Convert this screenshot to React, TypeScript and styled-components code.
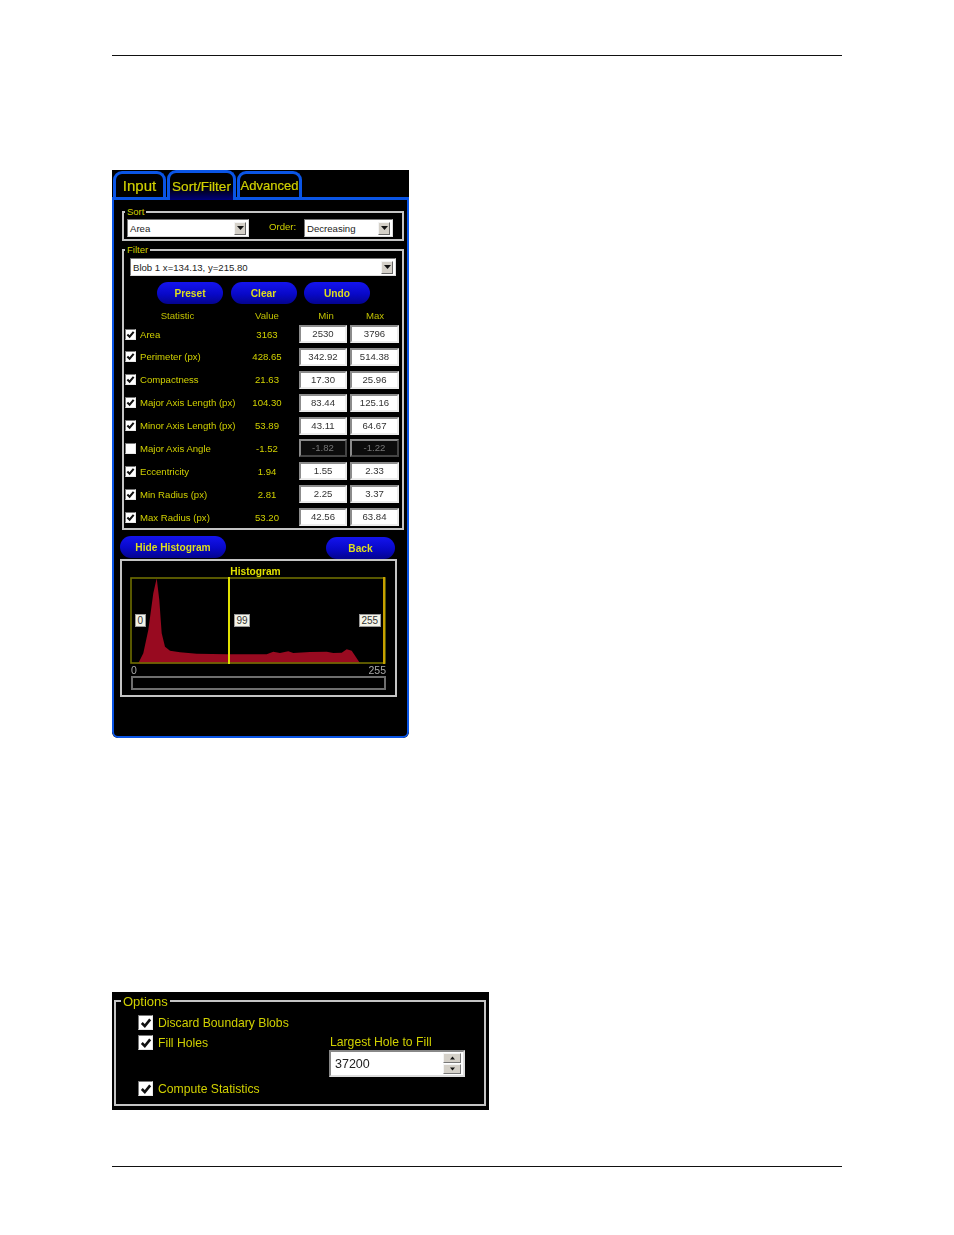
import React from 'react'
import styled, { createGlobalStyle } from 'styled-components'

const GlobalStyle = createGlobalStyle`
  html, body {
    margin: 0;
    padding: 0;
    background: #ffffff;
  }
  body {
    font-family: Tahoma, "Liberation Sans", Arial, sans-serif;
  }
`

const YELLOW = '#d0d000'

const Page = styled.main`
  width: 954px;
  height: 1235px;
  box-sizing: border-box;
  padding: 55px 112px 0;
  overflow: hidden;
`

const Rule = styled.hr`
  width: 730px;
  height: 1px;
  margin: 0;
  border: 0;
  background: #111;
`

const AppPanel = styled.section`
  width: 297px;
  height: 568px;
  margin-top: 114px;
  background: #000;
  border-radius: 0 0 6px 6px;
  box-sizing: border-box;
  filter: blur(0.5px);
  overflow: hidden;
`

const TabBar = styled.nav`
  display: flex;
  align-items: flex-end;
  height: 27px;
  box-sizing: border-box;
  padding-left: 1px;
  gap: 1px;
`

const Tab = styled.div<{ $active?: boolean; $width: number; $size: number }>`
  width: ${p => p.$width}px;
  height: ${p => (p.$active ? 30 : 26)}px;
  margin-bottom: ${p => (p.$active ? -3 : 0)}px;
  box-sizing: border-box;
  border: 3px solid #0a55e6;
  border-bottom: 0;
  border-radius: 9px 9px 0 0;
  background: ${p => (p.$active ? 'linear-gradient(#000 50%, #00007a)' : '#000')};
  color: ${YELLOW};
  font-size: ${p => p.$size}px;
  line-height: ${p => (p.$active ? 28 : 23)}px;
  -webkit-text-stroke: 0.2px ${YELLOW};
  text-align: center;
  white-space: nowrap;
  z-index: ${p => (p.$active ? 1 : 0)};
  position: relative;
`

const Body = styled.div`
  height: 541px;
  box-sizing: border-box;
  border: 2px solid #0a55e6;
  border-top-width: 3px;
  border-radius: 0 0 6px 6px;
  padding: 11px 0 0 6px;
`

const Group = styled.div<{ $width: number; $height: number; $inset?: number; $top?: number }>`
  position: relative;
  width: ${p => p.$width}px;
  height: ${p => p.$height}px;
  margin: ${p => p.$top ?? 0}px 0 0 ${p => p.$inset ?? 0}px;
  box-sizing: border-box;
  border: 2px solid #c4c4c4;
`

const Legend = styled.span<{ $large?: boolean }>`
  position: absolute;
  top: ${p => (p.$large ? -8 : -7)}px;
  left: ${p => (p.$large ? 5 : 1)}px;
  padding: 0 2px;
  background: #000;
  color: ${YELLOW};
  font-size: ${p => (p.$large ? 13 : 9.5)}px;
  line-height: ${p => (p.$large ? 16 : 11)}px;
`

const SortRow = styled.div`
  display: flex;
  align-items: center;
  padding: 6px 0 0 3px;
`

const OrderLabel = styled.span`
  margin: 0 7px 0 20px;
  color: ${YELLOW};
  font-size: 9.6px;
  line-height: 12px;
  width: 28px;
  white-space: nowrap;
  position: relative;
  top: -1px;
`

const Select = styled.div<{ $width: number }>`
  display: flex;
  align-items: center;
  justify-content: space-between;
  width: ${p => p.$width}px;
  height: 18px;
  box-sizing: border-box;
  padding: 0 2px 0 2px;
  background: #fff;
  border: 1px solid #777;
  border-right-color: #ddd;
  border-bottom-color: #ddd;
  color: #222;
  font-size: 9.6px;
`

const SelectArrow = styled.span`
  display: flex;
  align-items: center;
  justify-content: center;
  width: 12px;
  height: 13px;
  background: #d4d0c8;
  border: 1px solid;
  border-color: #f4f4f4 #666 #666 #f4f4f4;
  box-sizing: border-box;
`

const FilterBody = styled.div`
  padding: 7px 0 0 1px;
`

const FilterSelectWrap = styled.div`
  padding-left: 5px;
`

const ButtonRow = styled.div`
  display: flex;
  gap: 7.5px;
  margin-top: 6px;
  padding-left: 32px;
`

const PillButton = styled.button<{ $width: number }>`
  width: ${p => p.$width}px;
  height: 22px;
  padding: 0;
  border: 0;
  border-radius: 11px;
  background: linear-gradient(#1414ee, #0808c8 55%, #04048e);
  color: #dede1c;
  font-family: inherit;
  font-size: 10.2px;
  font-weight: bold;
`

const StatGrid = styled.div`
  display: grid;
  grid-template-columns: 15px 105px 44px 58px 52px;
  grid-auto-rows: 18px;
  row-gap: 4.875px;
  align-items: center;
  color: ${YELLOW};
  font-size: 9.6px;
  margin-top: 3px;
`

const HeaderGrid = styled(StatGrid)`
  grid-auto-rows: 14px;
  margin-top: 4px;
  margin-bottom: 0;
  color: #c0c000;
`

const HeadCell = styled.span<{ $pad?: number; $padRight?: number; $col: number }>`
  grid-column: ${p => p.$col};
  text-align: center;
  padding-left: ${p => p.$pad ?? 0}px;
  padding-right: ${p => p.$padRight ?? 0}px;
`

const Check = styled.span<{ $size?: number }>`
  display: flex;
  align-items: center;
  justify-content: center;
  width: ${p => p.$size ?? 11}px;
  height: ${p => p.$size ?? 11}px;
  box-sizing: border-box;
  background: #fff;
  border: 1px solid;
  border-color: #777 #e8e8e8 #e8e8e8 #777;
`

const StatLabel = styled.span`
  white-space: nowrap;
`

const StatValue = styled.span`
  text-align: center;
`

const NumberBox = styled.div<{ $disabled?: boolean; $width: number }>`
  justify-self: end;
  width: ${p => p.$width}px;
  height: 18px;
  box-sizing: border-box;
  border: 2px solid;
  border-color: ${p => (p.$disabled ? '#8a8a8a #444 #444 #8a8a8a' : '#8c8c8c #ececec #ececec #8c8c8c')};
  background: ${p => (p.$disabled ? '#0c0c0c' : '#fff')};
  color: ${p => (p.$disabled ? '#777' : '#333')};
  font-size: 9.6px;
  line-height: 14px;
  text-align: center;
`

const ActionRow = styled.div`
  display: flex;
  justify-content: space-between;
  width: 275px;
  height: 23px;
  margin-top: 6px;
`

const BackButton = styled(PillButton)`
  margin-top: 1px;
`

const HistInner = styled.div`
  padding-left: 8px;
`

const HistTitle = styled.div`
  height: 16px;
  padding-right: 14px;
  color: #e0e000;
  font-size: 10.2px;
  font-weight: bold;
  line-height: 22px;
  text-align: center;
  position: relative;
  z-index: 1;
`

const Plot = styled.div`
  position: relative;
  width: 256px;
  height: 87px;
`

const PlotSvg = styled.svg`
  display: block;
  width: 256px;
  height: 87px;
`

const Marker = styled.span<{ $left: number }>`
  position: absolute;
  left: ${p => p.$left}px;
  top: 37px;
  height: 13px;
  padding: 0 1.5px;
  background: #f4f4e8;
  border: 1px solid #999;
  box-sizing: border-box;
  color: #333;
  font-size: 10px;
  line-height: 11px;
`

const ScaleRow = styled.div`
  display: flex;
  justify-content: space-between;
  width: 256px;
  height: 12px;
  padding-left: 1px;
  box-sizing: border-box;
  color: #aaa;
  font-size: 10.5px;
  line-height: 13px;
`

const ScaleBar = styled.div`
  width: 255px;
  height: 14px;
  margin-left: 1px;
  box-sizing: border-box;
  border: 2px solid #6e6e6e;
`

const OptionsPanel = styled.section`
  width: 377px;
  height: 118px;
  margin-top: 254px;
  margin-bottom: 56px;
  padding: 8px 3px 4px 2px;
  box-sizing: border-box;
  background: #000;
  filter: blur(0.45px);
`

const OptionsGrid = styled.div`
  display: grid;
  grid-template-columns: 191px 136px;
  padding: 13px 0 0 22px;
`

const OptionList = styled.div`
  display: flex;
  flex-direction: column;
`

const OptionRow = styled.div<{ $top?: number }>`
  display: flex;
  align-items: center;
  gap: 5px;
  height: 15px;
  margin-top: ${p => p.$top ?? 0}px;
  color: ${YELLOW};
  font-size: 12.2px;
  white-space: nowrap;
`

const HoleField = styled.div`
  padding-top: 20px;
  color: ${YELLOW};
  font-size: 12.2px;
`

const HoleLabel = styled.div`
  height: 15px;
  padding-left: 1px;
  line-height: 14px;
  white-space: nowrap;
`

const Spinner = styled.div`
  display: flex;
  align-items: center;
  justify-content: space-between;
  width: 136px;
  height: 27px;
  box-sizing: border-box;
  padding: 0 2px 0 4px;
  background: #fff;
  border: 2px solid;
  border-color: #888 #ddd #ddd #888;
  color: #222;
  font-size: 12.5px;
`

const SpinButtons = styled.div`
  display: flex;
  flex-direction: column;
  gap: 1px;
  width: 18px;
`

const SpinButton = styled.span`
  display: flex;
  align-items: center;
  justify-content: center;
  height: 10px;
  background: #d4d0c8;
  border: 1px solid;
  border-color: #f4f4f4 #777 #777 #f4f4f4;
  box-sizing: border-box;
`

const CheckMark: React.FC<{ size: number }> = ({ size }) => (
  <svg width={size} height={size} viewBox="0 0 10 10">
    <path d="M1.5 5 L4 7.5 L8.5 2" fill="none" stroke="#111" strokeWidth="2.2" />
  </svg>
)

const Arrow: React.FC<{ up?: boolean; w?: number }> = ({ up, w = 7 }) => (
  <svg width={w} height={4} viewBox="0 0 7 4">
    <path d={up ? 'M3.5 0 L7 4 L0 4 Z' : 'M0 0 L7 0 L3.5 4 Z'} fill="#111" />
  </svg>
)

const stats = [
  { name: 'Area', value: '3163', min: '2530', max: '3796', on: true },
  { name: 'Perimeter (px)', value: '428.65', min: '342.92', max: '514.38', on: true },
  { name: 'Compactness', value: '21.63', min: '17.30', max: '25.96', on: true },
  { name: 'Major Axis Length (px)', value: '104.30', min: '83.44', max: '125.16', on: true },
  { name: 'Minor Axis Length (px)', value: '53.89', min: '43.11', max: '64.67', on: true },
  { name: 'Major Axis Angle', value: '-1.52', min: '-1.82', max: '-1.22', on: false },
  { name: 'Eccentricity', value: '1.94', min: '1.55', max: '2.33', on: true },
  { name: 'Min Radius (px)', value: '2.81', min: '2.25', max: '3.37', on: true },
  { name: 'Max Radius (px)', value: '53.20', min: '42.56', max: '63.84', on: true },
]

// plot coordinates of the red area, read off the reference
const histogram =
  '0,86.5 8.3,86.3 13.3,76.3 18.3,53 23.3,16.3 26.7,1.3 29.3,23 31.7,56.3 35,69.7 40,73.7 50,75.3 ' +
  '66.7,76.7 96.7,77.3 136.7,77.3 143.3,74.7 150,76 158.3,74.3 163.3,76 180,75 196.7,74.7 203.3,76 ' +
  '211.7,75.7 216.7,72.3 221.7,73.7 226.7,81.3 230,86.3 254,86.5'

export default function App() {
  return (
    <Page>
      <GlobalStyle />
      <Rule />

      <AppPanel>
        <TabBar>
          <Tab $width={53} $size={15}>Input</Tab>
          <Tab $width={69} $size={13.6} $active>Sort/Filter</Tab>
          <Tab $width={65} $size={13}>Advanced</Tab>
        </TabBar>
        <Body>
          <Group $width={282} $height={30} $inset={2}>
            <Legend>Sort</Legend>
            <SortRow>
              <Select $width={122}>
                Area
                <SelectArrow><Arrow /></SelectArrow>
              </Select>
              <OrderLabel>Order:</OrderLabel>
              <Select $width={89}>
                Decreasing
                <SelectArrow><Arrow /></SelectArrow>
              </Select>
            </SortRow>
          </Group>

          <Group $width={282} $height={281} $inset={2} $top={8}>
            <Legend>Filter</Legend>
            <FilterBody>
              <FilterSelectWrap>
                <Select $width={266}>
                  Blob 1 x=134.13, y=215.80
                  <SelectArrow><Arrow /></SelectArrow>
                </Select>
              </FilterSelectWrap>
              <ButtonRow>
                <PillButton $width={66}>Preset</PillButton>
                <PillButton $width={66}>Clear</PillButton>
                <PillButton $width={66}>Undo</PillButton>
              </ButtonRow>
              <HeaderGrid>
                <HeadCell $col={2} $padRight={30}>Statistic</HeadCell>
                <HeadCell $col={3}>Value</HeadCell>
                <HeadCell $col={4} $pad={16}>Min</HeadCell>
                <HeadCell $col={5} $pad={4}>Max</HeadCell>
              </HeaderGrid>
              <StatGrid>
                {stats.map(s => (
                  <React.Fragment key={s.name}>
                    <Check>{s.on && <CheckMark size={9} />}</Check>
                    <StatLabel>{s.name}</StatLabel>
                    <StatValue>{s.value}</StatValue>
                    <NumberBox $width={48} $disabled={!s.on}>{s.min}</NumberBox>
                    <NumberBox $width={49} $disabled={!s.on}>{s.max}</NumberBox>
                  </React.Fragment>
                ))}
              </StatGrid>
            </FilterBody>
          </Group>

          <ActionRow>
            <PillButton $width={106}>Hide Histogram</PillButton>
            <BackButton $width={69}>Back</BackButton>
          </ActionRow>

          <Group $width={277} $height={138}>
            <HistInner>
              <HistTitle>Histogram</HistTitle>
              <Plot>
                <PlotSvg viewBox="0 0 256 87">
                  <polygon points={histogram} fill="#980a20" />
                  <rect x="1" y="1" width="254" height="85" fill="none" stroke="#6e6e00" strokeWidth="1.6" />
                  <line x1="99" y1="0" x2="99" y2="87" stroke="#e0e000" strokeWidth="2" />
                  <line x1="254" y1="0" x2="254" y2="87" stroke="#c8a000" strokeWidth="2" />
                </PlotSvg>
                <Marker $left={5}>0</Marker>
                <Marker $left={104}>99</Marker>
                <Marker $left={229}>255</Marker>
              </Plot>
              <ScaleRow>
                <span>0</span>
                <span>255</span>
              </ScaleRow>
              <ScaleBar />
            </HistInner>
          </Group>
        </Body>
      </AppPanel>

      <OptionsPanel>
        <Group $width={372} $height={106}>
          <Legend $large>Options</Legend>
          <OptionsGrid>
            <OptionList>
              <OptionRow>
                <Check $size={15}><CheckMark size={12} /></Check>
                Discard Boundary Blobs
              </OptionRow>
              <OptionRow $top={5}>
                <Check $size={15}><CheckMark size={12} /></Check>
                Fill Holes
              </OptionRow>
              <OptionRow $top={31}>
                <Check $size={15}><CheckMark size={12} /></Check>
                Compute Statistics
              </OptionRow>
            </OptionList>
            <HoleField>
              <HoleLabel>Largest Hole to Fill</HoleLabel>
              <Spinner>
                37200
                <SpinButtons>
                  <SpinButton><Arrow up w={5} /></SpinButton>
                  <SpinButton><Arrow w={5} /></SpinButton>
                </SpinButtons>
              </Spinner>
            </HoleField>
          </OptionsGrid>
        </Group>
      </OptionsPanel>

      <Rule />
    </Page>
  )
}
